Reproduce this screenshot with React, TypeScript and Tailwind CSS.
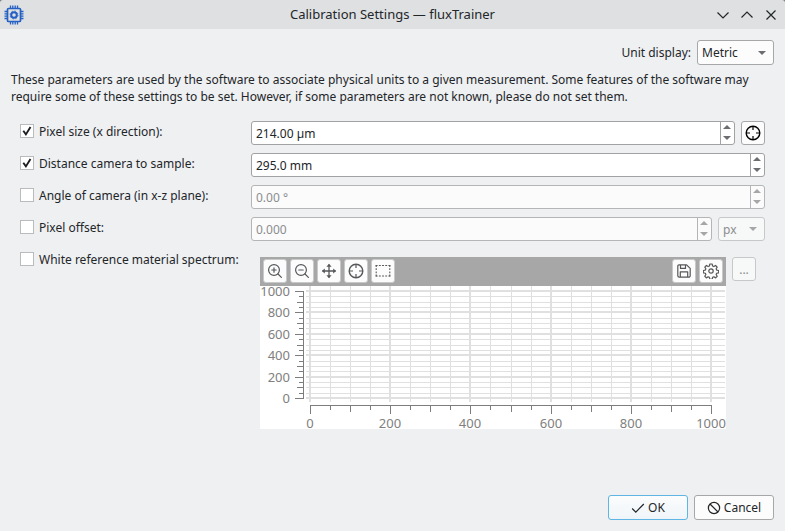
import React, { useState } from 'react';

type IconProps = { className?: string };

const ZoomInIcon: React.FC<IconProps> = ({ className }) => (
  <svg viewBox="0 0 16 16" className={className} fill="none" stroke="currentColor" strokeWidth="1.2" strokeLinecap="round">
    <circle cx="7" cy="7" r="5.4" />
    <path d="M11 11l3.4 3.4M4.8 7h4.4M7 4.8v4.4" />
  </svg>
);

const ZoomOutIcon: React.FC<IconProps> = ({ className }) => (
  <svg viewBox="0 0 16 16" className={className} fill="none" stroke="currentColor" strokeWidth="1.2" strokeLinecap="round">
    <circle cx="7" cy="7" r="5.4" />
    <path d="M11 11l3.4 3.4M4.8 7h4.4" />
  </svg>
);

const MoveIcon: React.FC<IconProps> = ({ className }) => (
  <svg viewBox="0 0 16 16" className={className} fill="none" stroke="currentColor" strokeWidth="1.3">
    <path d="M8 1.5v13M1.5 8h13" />
    <path d="M8 .8L5.4 3.8h5.2zM8 15.2l-2.600-3h5.200zM.8 8l3-2.600v5.200zM15.200 8l-3-2.600v5.200z" fill="currentColor" stroke="none" />
  </svg>
);

const CrosshairIcon: React.FC<IconProps> = ({ className }) => (
  <svg viewBox="0 0 16 16" className={className} fill="none" stroke="currentColor">
    <circle cx="8" cy="8" r="6.800" strokeWidth="1.4" />
    <path d="M8 1.200v3.800M8 11v3.800M1.200 8H5M11 8h3.800" strokeWidth="1.2" />
  </svg>
);

const SelectionIcon: React.FC<IconProps> = ({ className }) => (
  <svg viewBox="0 0 16 16" className={className} fill="none" stroke="currentColor" strokeWidth="1.1">
    <path d="M.7 2.500h14.600M.7 13h14.600" strokeDasharray="1.900 1.280" />
    <path d="M1.200 2v11.500M14.800 2v11.500" strokeDasharray="1.900 1.300" />
  </svg>
);

const SaveIcon: React.FC<IconProps> = ({ className }) => (
  <svg viewBox="0 0 16 16" className={className} fill="none" stroke="currentColor" strokeWidth="1.2" strokeLinejoin="round">
    <path d="M3 1.800h7.600l3.600 3.600v7.400a1.400 1.400 0 0 1-1.400 1.400H3.200a1.400 1.400 0 0 1-1.400-1.400V3A1.200 1.200 0 0 1 3 1.800z" />
    <path d="M4.500 2v3.400h5V2M4.300 14V8.800h7.400V14" />
  </svg>
);

const GearIcon: React.FC<IconProps> = ({ className }) => (
  <svg viewBox="0 0 24 24" className={className} fill="none" stroke="currentColor" strokeWidth="1.8" strokeLinejoin="round">
    <circle cx="12" cy="12" r="3.3" />
    <path d="M10.3 1.5h3.4l.7 3 1.9.8 2.6-1.6 2.4 2.4-1.6 2.6.8 1.9 3 .7v3.4l-3 .7-.8 1.9 1.6 2.6-2.4 2.4-2.6-1.6-1.9.8-.7 3h-3.4l-.7-3-1.9-.8-2.6 1.6-2.4-2.4 1.6-2.6-.8-1.9-3-.7v-3.4l3-.7.8-1.9-1.6-2.6 2.4-2.4 2.6 1.6 1.9-.8z" />
  </svg>
);

const ChipIcon: React.FC<IconProps> = ({ className }) => (
  <svg viewBox="0 0 20 20" className={className} fill="none" stroke="currentColor">
    <rect x="3.5" y="3.500" width="13" height="13" rx="1" strokeWidth="1.7" />
    <path d="M6.5 .5V3M8.8 .5V3M11.200 .5V3M13.500 .5V3M6.500 17v2.500M8.800 17v2.500M11.200 17v2.500M13.500 17v2.500M.5 6.500H3M.5 8.800H3M.5 11.200H3M.5 13.500H3M17 6.500h2.500M17 8.800h2.500M17 11.200h2.500M17 13.500h2.500" strokeWidth="1.3" />
    <circle cx="10" cy="10" r="2.800" strokeWidth="2" />
    <circle cx="10" cy="10" r="4" strokeWidth=".8" strokeDasharray="1.500 1.640" />
  </svg>
);

const Arrow: React.FC<IconProps & { up?: boolean }> = ({ className, up }) => (
  <svg viewBox="0 0 8 4" className={className} fill="currentColor">
    <path d={up ? 'M0 4l4-4 4 4z' : 'M0 0l4 4 4-4z'} />
  </svg>
);

interface CheckFieldProps {
  id: string;
  label: string;
  checked: boolean;
  onChange: (checked: boolean) => void;
}

const CheckField: React.FC<CheckFieldProps> = ({ id, label, checked, onChange }) => (
  <div className="flex h-5 items-center gap-[5px]">
    <span className="grid size-[14px] shrink-0">
      <input
        id={id}
        type="checkbox"
        checked={checked}
        onChange={e => onChange(e.target.checked)}
        className="col-start-1 row-start-1 size-[14px] appearance-none border border-[#b9bbbd] bg-white"
      />
      {checked && (
        <svg viewBox="0 0 14 14" className="pointer-events-none col-start-1 row-start-1 size-[14px]" fill="none" stroke="#1b1e20" strokeWidth="1.9">
          <path d="M3.3 6.8l2.6 3.6L10.500 3" />
        </svg>
      )}
    </span>
    <label htmlFor={id} className="whitespace-nowrap">{label}</label>
  </div>
);

interface SpinBoxProps {
  label: string;
  value: string;
  disabled?: boolean;
}

const SpinBox: React.FC<SpinBoxProps> = ({ label, value, disabled = false }) => {
  const [text, setText] = useState(value);

  const step = (delta: number) => {
    const match = text.match(/^(-?[\d.]+)(.*)$/);
    if (!match) return;
    const decimals = (match[1].split('.')[1] || '').length;
    setText((parseFloat(match[1]) + delta).toFixed(decimals) + match[2]);
  };

  return (
    <div
      className={`flex h-6 min-w-0 flex-1 overflow-hidden rounded-[3px] border ${
        disabled ? 'border-[#b4b5b7] bg-[#fbfbfb] text-[#8b8d8f]' : 'border-[#a0a2a4] bg-white'
      }`}
    >
      <input
        type="text"
        aria-label={label}
        value={text}
        disabled={disabled}
        onChange={e => setText(e.target.value)}
        className="min-w-0 flex-1 px-1 outline-none"
      />
      <div className={`flex w-[14px] flex-col border-l pr-px pb-px ${disabled ? 'border-[#b4b5b7] text-[#a5a6a8]' : 'border-[#a0a2a4] text-[#6b6d70]'}`}>
        <button type="button" aria-label={`Increase ${label}`} disabled={disabled} onClick={() => step(1)} className="flex flex-1 items-center justify-center">
          <Arrow up className="h-1 w-2" />
        </button>
        <button type="button" aria-label={`Decrease ${label}`} disabled={disabled} onClick={() => step(-1)} className="flex flex-1 items-center justify-center">
          <Arrow className="h-1 w-2" />
        </button>
      </div>
    </div>
  );
};

const ToolButton: React.FC<{ label: string; children: React.ReactNode }> = ({ label, children }) => (
  <button
    type="button"
    aria-label={label}
    className="flex size-6 items-center justify-center rounded-[3px] border border-[#c8c9ca] bg-[#fcfcfc] text-[#555759]"
  >
    {children}
  </button>
);

// Plot geometry: one step is 50 units on either axis
const STEPS = Array.from({ length: 21 }, (_, i) => i);
const xAt = (i: number) => Math.round(50 + i * 20.05);
const yAt = (i: number) => Math.round(112 - i * 5.35);
const tickLength = (i: number) => (i % 4 === 0 ? 9 : i % 2 === 0 ? 7 : 5);

const SpectrumPlot: React.FC = () => (
  <svg viewBox="0 0 466 143" className="block h-auto w-full overflow-visible bg-white text-[13px]" role="img" aria-label="White reference spectrum">
    <g fill="#e0e0e0" shapeRendering="crispEdges">
      {STEPS.map(i => (
        <rect key={`v${i}`} x={i % 4 ? xAt(i) : xAt(i) - 1} y={0} width={i % 4 ? 1 : 2} height={116} />
      ))}
      {STEPS.map(i => (
        <rect key={`h${i}`} x={46} y={i % 4 ? yAt(i) : yAt(i) - 1} width={419} height={i % 4 ? 1 : 2} />
      ))}
    </g>
    <g fill="#7d7d7d" shapeRendering="crispEdges">
      <rect x={43} y={5} width={1} height={108} />
      <rect x={50} y={119} width={402} height={1} />
      {STEPS.map(i => (
        <rect key={`y${i}`} x={44 - tickLength(i)} y={yAt(i)} width={tickLength(i)} height={1} />
      ))}
      {STEPS.map(i => (
        <rect key={`x${i}`} x={xAt(i)} y={119} width={1} height={tickLength(i)} />
      ))}
    </g>
    <g fill="#808080">
      {STEPS.filter(i => i % 4 === 0).map(i => (
        <text key={`ly${i}`} x={30} y={yAt(i) + 5} textAnchor="end">{i * 50}</text>
      ))}
      {STEPS.filter(i => i % 4 === 0).map(i => (
        <text key={`lx${i}`} x={xAt(i)} y={142} textAnchor="middle">{i * 50}</text>
      ))}
    </g>
  </svg>
);

const App: React.FC = () => {
  const [pixelSize, setPixelSize] = useState(true);
  const [distance, setDistance] = useState(true);
  const [angle, setAngle] = useState(false);
  const [offset, setOffset] = useState(false);
  const [whiteRef, setWhiteRef] = useState(false);

  return (
    <div className="flex min-h-screen flex-col bg-[#77797b] font-['Noto_Sans',sans-serif] text-xs leading-[17px] text-[#232629]">
      <header className="grid h-[29px] grid-cols-[1fr_auto_1fr] items-center rounded-t-[3px] bg-[#dee0e2] px-1">
        <ChipIcon className="size-5 text-[#2560c4]" />
        <h1 className="text-[13px]">Calibration Settings — fluxTrainer</h1>
        <div className="flex justify-end gap-2 pr-[2px]">
          <button type="button" aria-label="Minimize" className="flex size-4 items-center justify-center">
            <svg viewBox="0 0 16 16" className="size-4" fill="none" stroke="currentColor" strokeWidth="1.2"><path d="M2.5 5.500L8 11l5.500-5.500" /></svg>
          </button>
          <button type="button" aria-label="Maximize" className="flex size-4 items-center justify-center">
            <svg viewBox="0 0 16 16" className="size-4" fill="none" stroke="currentColor" strokeWidth="1.2"><path d="M2.5 10.500L8 5l5.500 5.500" /></svg>
          </button>
          <button type="button" aria-label="Close" className="flex size-4 items-center justify-center">
            <svg viewBox="0 0 16 16" className="size-4" fill="none" stroke="currentColor" strokeWidth="1.2"><path d="M3.5 3.500l9 9M12.500 3.500l-9 9" /></svg>
          </button>
        </div>
      </header>

      <main className="flex flex-1 flex-col bg-[#eff0f2] p-[11px]">
        <div className="flex items-center justify-end gap-[6px]">
          <label htmlFor="unit">Unit display:</label>
          <div className="grid w-[77px] items-center">
            <select
              id="unit"
              defaultValue="Metric"
              className="col-start-1 row-start-1 h-[25px] w-full appearance-none rounded-[3px] border border-[#a5a7a9] bg-[#fcfcfc] px-1"
            >
              <option>Metric</option>
              <option>Imperial</option>
            </select>
            <Arrow className="pointer-events-none col-start-1 row-start-1 mr-2 h-1 w-2 justify-self-end text-[#6b6d70]" />
          </div>
        </div>

        <p className="mt-[6px]">
          These parameters are used by the software to associate physical units to a given measurement. Some features of the software may
          require some of these settings to be set. However, if some parameters are not known, please do not set them.
        </p>

        <div className="mt-4 grid grid-cols-[219px_1fr] gap-x-3 gap-y-2 px-[9px]">
          <CheckField id="pixel-size" label="Pixel size (x direction):" checked={pixelSize} onChange={setPixelSize} />
          <div className="flex gap-[6px]">
            <SpinBox label="Pixel size" value="214.00 µm" disabled={!pixelSize} />
            <button type="button" aria-label="Pick pixel size" className="flex size-6 items-center justify-center rounded-[3px] border border-[#a5a7a9] bg-[#fcfcfc] pb-px text-black">
              <CrosshairIcon className="size-4" />
            </button>
          </div>

          <CheckField id="distance" label="Distance camera to sample:" checked={distance} onChange={setDistance} />
          <div className="flex">
            <SpinBox label="Distance" value="295.0 mm" disabled={!distance} />
          </div>

          <CheckField id="angle" label="Angle of camera (in x-z plane):" checked={angle} onChange={setAngle} />
          <div className="flex">
            <SpinBox label="Angle" value="0.00 °" disabled={!angle} />
          </div>

          <CheckField id="offset" label="Pixel offset:" checked={offset} onChange={setOffset} />
          <div className="flex gap-[6px]">
            <SpinBox label="Offset" value="0.000" disabled={!offset} />
            <div className="grid w-[47px] items-center">
              <select
                aria-label="Offset unit"
                disabled={!offset}
                className="col-start-1 row-start-1 h-6 w-full appearance-none rounded-[3px] border border-[#c6c8ca] bg-[#f7f8f8] px-1 text-[#8b8d8f] disabled:opacity-100"
              >
                <option>px</option>
                <option>mm</option>
              </select>
              <Arrow className="pointer-events-none col-start-1 row-start-1 mr-2 h-1 w-2 justify-self-end text-[#a5a6a8]" />
            </div>
          </div>

          <CheckField id="white-ref" label="White reference material spectrum:" checked={whiteRef} onChange={setWhiteRef} />
          <div className="flex items-start gap-[6px] px-[9px] pt-2">
            <div className="min-w-0 flex-1">
              <div className="flex h-[29px] items-start gap-[3px] bg-[#a7a7a7] px-[3px] pt-[2px]">
                <ToolButton label="Zoom in"><ZoomInIcon className="size-4" /></ToolButton>
                <ToolButton label="Zoom out"><ZoomOutIcon className="size-4" /></ToolButton>
                <ToolButton label="Pan"><MoveIcon className="size-4" /></ToolButton>
                <ToolButton label="Pick point"><CrosshairIcon className="size-4" /></ToolButton>
                <ToolButton label="Select area"><SelectionIcon className="size-4" /></ToolButton>
                <div className="flex-1" />
                <ToolButton label="Save"><SaveIcon className="size-4" /></ToolButton>
                <ToolButton label="Plot settings"><GearIcon className="size-4" /></ToolButton>
              </div>
              <SpectrumPlot />
            </div>
            <button type="button" disabled={!whiteRef} className="size-6 rounded-[3px] border border-[#c6c8ca] bg-[#f7f8f8] text-[#8b8d8f]">...</button>
          </div>
        </div>

        <footer className="mt-auto flex justify-end gap-[6px]">
          <button type="button" className="flex h-[25px] w-20 items-center justify-center gap-[3px] rounded-[3px] border border-[#5fb5e3] bg-linear-to-b from-[#fcfcfc] to-[#eef5f9]">
            <svg viewBox="0 0 14 14" className="size-[14px]" fill="none" stroke="currentColor" strokeWidth="1.2"><path d="M1.2 7.500l3.600 3.600L12.800 3" /></svg>
            OK
          </button>
          <button type="button" className="flex h-[25px] w-20 items-center justify-center gap-[3px] rounded-[3px] border border-[#a5a7a9] bg-[#fcfcfc]">
            <svg viewBox="0 0 14 14" className="size-[14px]" fill="none" stroke="currentColor" strokeWidth="1.2"><circle cx="7" cy="7" r="5.6" /><path d="M3 3l8 8" /></svg>
            Cancel
          </button>
        </footer>
      </main>
    </div>
  );
};

export default App;
